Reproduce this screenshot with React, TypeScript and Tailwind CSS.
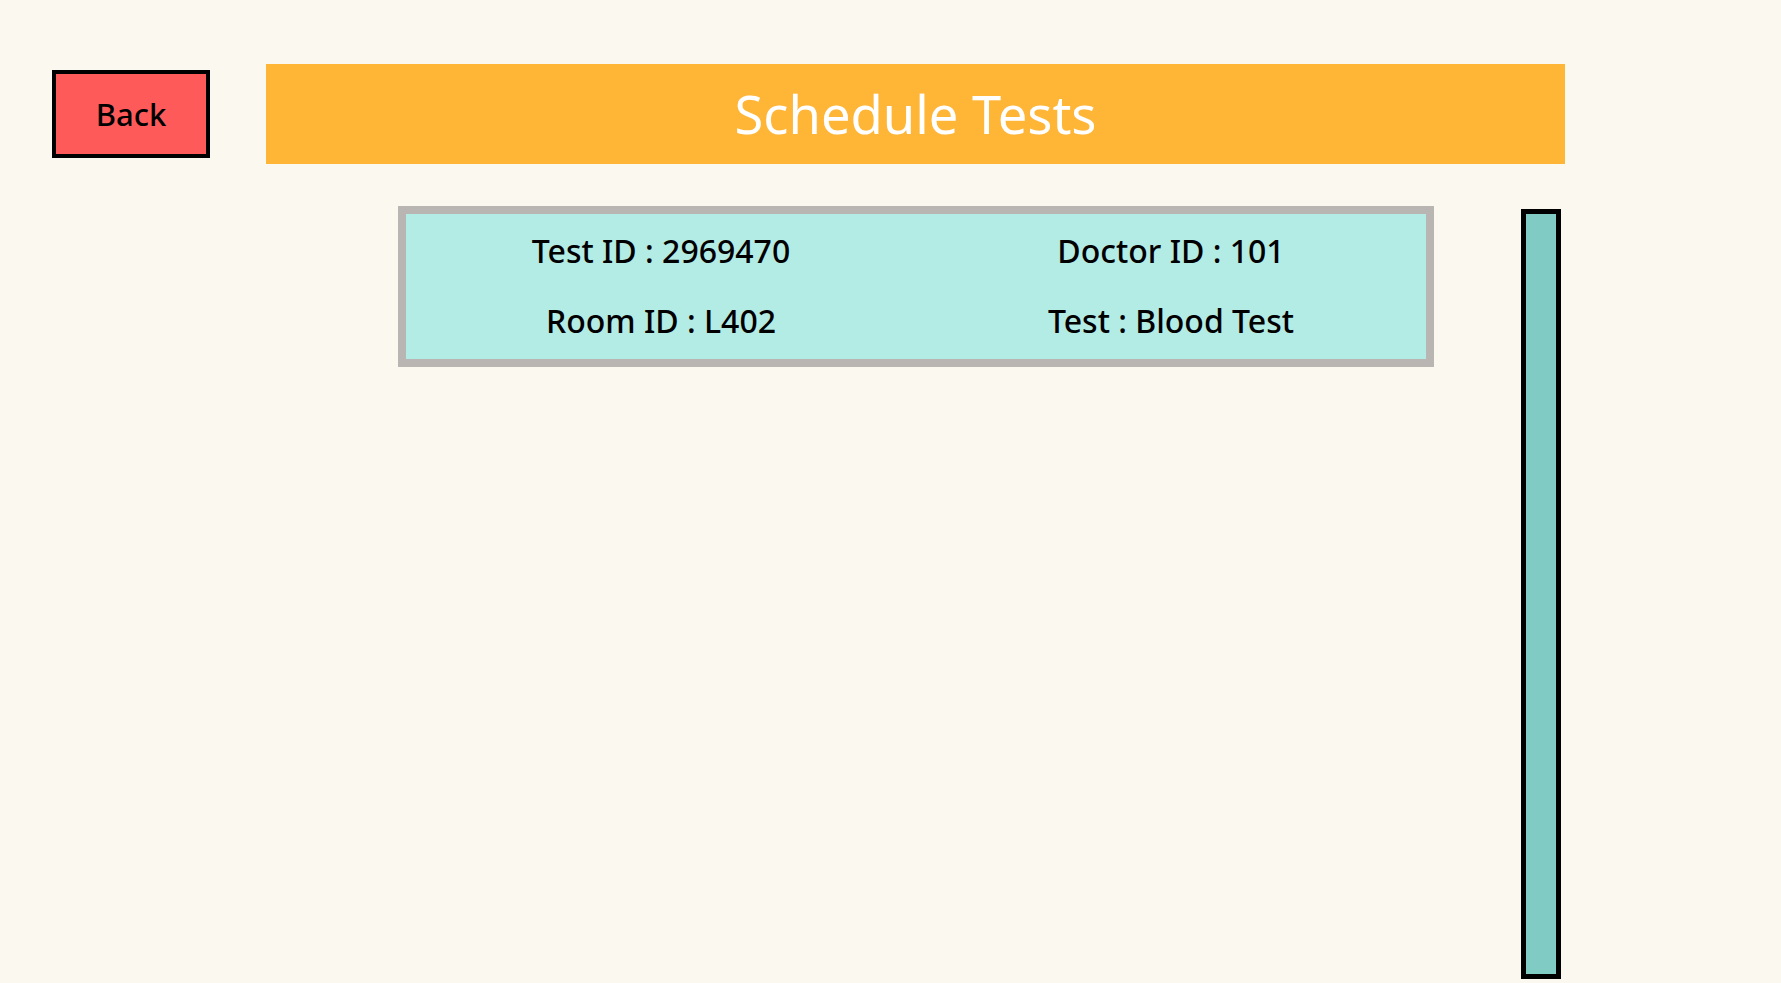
import React from "react";

export default function App() {
  const font = { fontFamily: '"Noto Sans", "Open Sans", sans-serif' };
  return (
    <div className="w-[1781px] h-[983px] bg-[#fbf8f0] overflow-hidden" style={font}>
      <div className="flex items-start pt-[64px] pl-[52px]">
        <button className="mt-[6px] w-[158px] h-[88px] bg-[#ff5a5a] border-4 border-black flex items-center justify-center text-[31px] font-medium text-black leading-none">
          Back
        </button>
        <div className="ml-[56px] w-[1299px] h-[100px] bg-[#ffb536] flex items-center justify-center">
          <h1 className="text-[52.5px] text-white font-normal leading-none">Schedule Tests</h1>
        </div>
      </div>
      <div className="flex items-start">
        <div className="ml-[398px] mt-[42px] w-[1036px] h-[161px] border-8 border-[#b9b5b3] bg-[#b3ebe5] grid grid-cols-2 content-start pt-[16px] gap-y-[28px] text-[32px] font-medium leading-[42px] text-black">
          <div className="text-center">Test ID : 2969470</div>
          <div className="text-center">Doctor ID : 101</div>
          <div className="text-center">Room ID : L402</div>
          <div className="text-center">Test : Blood Test</div>
        </div>
        <div className="ml-[87px] mt-[45px] w-[40px] h-[770px] border-[5px] border-black bg-[#80cbc3]" />
      </div>
    </div>
  );
}
